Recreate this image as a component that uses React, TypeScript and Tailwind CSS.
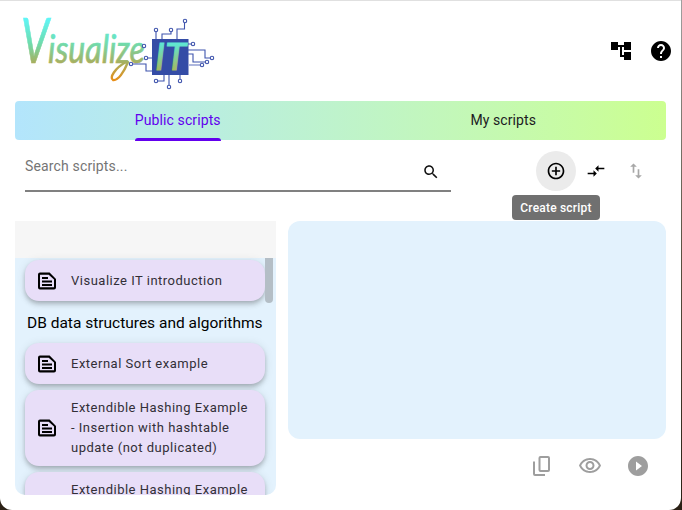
import React from "react";

const roboto = { fontFamily: "Roboto, sans-serif" };

function DocIcon() {
  return (
    <svg width="24" height="24" viewBox="0 0 24 24" className="shrink-0" fill="black">
      <path d="M5 3.500h9.600L21 9.900V18.500a2 2 0 0 1-2 2H5a2 2 0 0 1-2-2v-13a2 2 0 0 1 2-2zm.2 2.200a.2.2 0 0 0-.2.2v12.200c0 .2.1.2.2.2h13.600c.1 0 .2-.1.2-.2v-7.600L13.700 5.700H5.200z" />
      <path d="M7 8h6v2H7zM7 11.500h10v2H7zM7 15h10v2H7z" />
    </svg>
  );
}

function Card({ lines, className = "" }: { lines: string[]; className?: string }) {
  return (
    <div className={`w-[240px] shrink-0 rounded-[14px] bg-[#e8def8] flex items-center pl-[10px] pr-2 shadow-[0_2px_4px_-1px_rgba(0,0,0,0.16),0_4px_5px_0_rgba(0,0,0,0.12),0_1px_10px_0_rgba(0,0,0,0.1)] ${className}`}>
      <DocIcon />
      <div className="ml-[12px] text-[13px] leading-[20px] tracking-[0.5px] text-[#322f37]">
        {lines.map((l) => (
          <div key={l} className="whitespace-nowrap">{l}</div>
        ))}
      </div>
    </div>
  );
}

function Logo() {
  return (
    <svg width="205" height="80" viewBox="15 10 205 80">
      <defs>
        <linearGradient id="v" gradientUnits="userSpaceOnUse" x1="0" y1="18" x2="0" y2="81">
          <stop offset="0" stopColor="#5ff6f8" />
          <stop offset="0.4" stopColor="#6fdcae" />
          <stop offset="0.72" stopColor="#a9ae5c" />
          <stop offset="1" stopColor="#ea8d15" />
        </linearGradient>
        <linearGradient id="t" gradientUnits="userSpaceOnUse" x1="0" y1="44" x2="0" y2="71">
          <stop offset="0" stopColor="#5fe6d2" />
          <stop offset="1" stopColor="#a8b85c" />
        </linearGradient>
      </defs>
      <text x="21" y="63" fill="url(#v)" stroke="url(#v)" strokeWidth="0.6" fontFamily="Lato, sans-serif" fontStyle="italic" fontSize="62" textLength="28" lengthAdjust="spacingAndGlyphs">V</text>
      <text x="48" y="63" fill="url(#v)" stroke="url(#v)" strokeWidth="0.7" fontFamily="Lato, sans-serif" fontStyle="italic" fontSize="38" textLength="97" lengthAdjust="spacingAndGlyphs">isualize</text>
      <path d="M126 62C115 68 109 78 113 80C118 81 124 72 128 62" fill="none" stroke="url(#v)" strokeWidth="2.400" strokeLinecap="round" />
      <rect x="152" y="39" width="36.500" height="36" fill="#344ca6" />
      <text x="155" y="70" fill="url(#t)" stroke="url(#t)" strokeWidth="1" fontFamily="Lato, sans-serif" fontStyle="italic" fontSize="36" textLength="31" lengthAdjust="spacingAndGlyphs">IT</text>
      <g stroke="#3f54ad" strokeWidth="1.100" fill="none">
        <path d="M156 39V32M162 39V34H171V32M177 39V29H184.500V23" />
        <path d="M188 44H191.500M188 50H205V58H210M188 54H193V62H205" />
        <path d="M188 65H200" stroke="#9aa6d6" strokeWidth="1.600" />
        <path d="M148 58H152M133 64H146V71H152" />
        <path d="M158 81H164V75M169 75V85M180 75V79" />
        <circle cx="156" cy="30" r="1.700" fill="#fff" />
        <circle cx="171" cy="30" r="1.700" fill="#fff" />
        <circle cx="185" cy="21" r="1.700" fill="#fff" />
        <circle cx="144" cy="46" r="1.700" fill="#fff" />
        <circle cx="146" cy="58" r="1.700" fill="#fff" />
        <circle cx="131" cy="64" r="1.700" fill="#fff" />
        <circle cx="193" cy="44" r="1.700" fill="#fff" />
        <circle cx="212" cy="58" r="1.700" fill="#fff" />
        <circle cx="207" cy="62" r="1.700" fill="#fff" />
        <circle cx="202" cy="65" r="1.700" fill="#fff" />
        <circle cx="156" cy="81" r="1.700" fill="#fff" />
        <circle cx="169" cy="87" r="1.700" fill="#fff" />
        <circle cx="180" cy="81" r="1.700" fill="#fff" />
      </g>
    </svg>
  );
}

export default function App() {
  return (
    <div className="w-[682px] h-[510px] bg-gradient-to-b from-[#a0a0a0] via-[#5a5040] to-[#2a2015] overflow-hidden" style={roboto}>
      <div className="w-[681px] h-full bg-white rounded-b-[12px] border-t border-[#e0e0e0] pl-[15px] pr-[15px] flex flex-col">
        <div className="h-[100px] flex shrink-0 items-start justify-between">
          <div className="mt-[9px]"><Logo /></div>
          <div className="flex items-center gap-[16px] mt-[38px] mr-[-7px]">
            <svg width="24" height="24" viewBox="0 0 24 24" fill="black">
              <path d="M22 11V3h-7v3H9V3H2v8h7V8h2v10h4v3h7v-8h-7v3h-2V8h2v3z" />
            </svg>
            <svg width="24" height="24" viewBox="0 0 24 24" fill="black">
              <path d="M12 2C6.480 2 2 6.480 2 12s4.480 10 10 10 10-4.480 10-10S17.520 2 12 2zm1 17h-2v-2h2v2zm2.070-7.750l-.9.920C13.450 12.900 13 13.500 13 15h-2v-.5c0-1.100.45-2.100 1.170-2.830l1.240-1.260c.37-.36.59-.86.59-1.410 0-1.100-.9-2-2-2s-2 .9-2 2H8c0-2.210 1.790-4 4-4s4 1.790 4 4c0 .88-.36 1.680-.93 2.250z" />
            </svg>
          </div>
        </div>

        <div className="h-[39px] shrink-0 rounded-[4px] bg-gradient-to-r from-[#b3e5fc] to-[#ccff90] grid grid-cols-2 text-[14px] tracking-[0.1px]">
          <div className="flex justify-center">
            <div className="relative h-[39px] w-[86px] flex items-center justify-center whitespace-nowrap text-[#6200ee] pb-[1px]">
              Public scripts
              <div className="absolute left-0 right-0 bottom-[-1px] h-[3px] bg-[#6200ee] rounded-t-[3px]" />
            </div>
          </div>
          <div className="flex items-center justify-center text-[#1c1b1f] pb-[1px]">My scripts</div>
        </div>

        <div className="h-[81px] shrink-0 flex items-start relative">
          <div className="ml-[10px] w-[426px] h-[52px] border-b-2 border-[#808080] flex items-start justify-between pr-[11px]">
            <span className="mt-[16px] leading-[20px] text-[14px] text-[#757575] tracking-[0.15px]">Search scripts...</span>
            <svg width="18" height="18" viewBox="0 0 24 24" fill="#111" className="mt-[23px]">
              <path d="M15.500 14h-.79l-.28-.27C15.410 12.590 16 11.110 16 9.500 16 5.910 13.090 3 9.500 3S3 5.910 3 9.500 5.910 16 9.500 16c1.610 0 3.090-.59 4.230-1.570l.27.28v.79l5 4.990L20.490 19l-4.990-5zm-6 0C7.010 14 5 11.990 5 9.500S7.010 5 9.500 5 14 7.010 14 9.500 11.990 14 9.500 14z" />
            </svg>
          </div>
          <div className="ml-[85px] mt-[11px] w-[40px] h-[40px] rounded-full bg-[#ebebeb] flex items-center justify-center">
            <svg width="20" height="20" viewBox="0 0 24 24" fill="black">
              <path d="M13 7h-2v4H7v2h4v4h2v-4h4v-2h-4V7zm-1-5C6.490 2 2 6.490 2 12s4.490 10 10 10 10-4.490 10-10S17.510 2 12 2zm0 18c-4.410 0-8-3.590-8-8s3.590-8 8-8 8 3.590 8 8-3.590 8-8 8z" />
            </svg>
          </div>
          <div className="ml-[10px] mt-[21px] w-[20px] h-[20px]">
            <svg width="20" height="20" viewBox="0 0 24 24" fill="black">
              <path d="M9.010 14H2v2h7.010v3L13 15l-3.990-4v3zm5.980-1v-3H22V8h-7.010V5L11 9l3.990 4z" />
            </svg>
          </div>
          <div className="ml-[20px] mt-[21px] w-[20px] h-[20px]">
            <svg width="20" height="20" viewBox="0 0 24 24" fill="#a8a8a8">
              <path d="M16 17.010V10h-2v7.010h-3L15 21l4-3.990h-3zM9 3L5 6.990h3V14h2V6.990h3L9 3z" />
            </svg>
          </div>
          <div className="absolute left-[497px] top-[55px] h-[25px] w-[88px] rounded-[4px] bg-[#707070] text-white text-[12px] font-medium tracking-[0.2px] flex items-center justify-center z-10">
            Create script
          </div>
        </div>

        <div className="flex-1 min-h-0 flex gap-[12px] pb-[15px]">
          <div className="w-[261px] rounded-b-[10px] bg-[#e3f2fd] overflow-hidden flex flex-col relative">
            <div className="h-[37px] bg-[#f6f6f6] shrink-0" />
            <div className="absolute right-[3px] top-[37px] w-[8px] h-[45px] rounded-b-[4px] bg-[#b4bec6]" />
            <div className="pl-[10px] pt-[2px] flex flex-col gap-[6px]">
              <Card lines={["Visualize IT introduction"]} className="h-[41px]" />
              <div className="h-[30px] pt-[3px] flex items-center pl-[2px] text-[15.5px] font-normal text-black whitespace-nowrap">
                DB data structures and algorithms
              </div>
              <Card lines={["External Sort example"]} className="h-[41px]" />
              <Card lines={["Extendible Hashing Example", "- Insertion with hashtable", "update (not duplicated)"]} className="h-[76px]" />
              <Card lines={["Extendible Hashing Example", "- Insertion with hashtable", "update (duplicated)"]} className="h-[76px]" />
            </div>
          </div>
          <div className="w-[378px] flex flex-col">
            <div className="h-[218px] rounded-[12px] bg-[#e3f2fd]" />
            <div className="flex justify-end items-center gap-[24px] pr-[16px] mt-[15px]">
              <svg width="24" height="24" viewBox="0 0 24 24" fill="none" stroke="#9e9e9e" strokeWidth="2">
                <rect x="9.500" y="3" width="9.500" height="14" rx="1" />
                <path d="M4 7.500V20a1 1 0 0 0 1 1h10" />
              </svg>
              <svg width="24" height="24" viewBox="0 0 24 24" fill="#9e9e9e">
                <path d="M12 6c3.790 0 7.170 2.130 8.820 5.500C19.170 14.870 15.790 17 12 17s-7.170-2.130-8.820-5.500C4.830 8.130 8.210 6 12 6m0-2C7 4 2.730 7.110 1 11.500 2.730 15.890 7 19 12 19s9.270-3.110 11-7.500C21.270 7.110 17 4 12 4zm0 5c1.380 0 2.500 1.120 2.500 2.500S13.380 14 12 14s-2.500-1.120-2.500-2.500S10.620 9 12 9m0-2c-2.480 0-4.500 2.020-4.500 4.500S9.520 16 12 16s4.500-2.020 4.500-4.500S14.480 7 12 7z" />
              </svg>
              <svg width="24" height="24" viewBox="0 0 24 24" fill="#9e9e9e">
                <path d="M12 2C6.480 2 2 6.480 2 12s4.480 10 10 10 10-4.480 10-10S17.520 2 12 2zm-2 14.500v-9l6 4.500-6 4.500z" />
              </svg>
            </div>
          </div>
        </div>
      </div>
    </div>
  );
}
